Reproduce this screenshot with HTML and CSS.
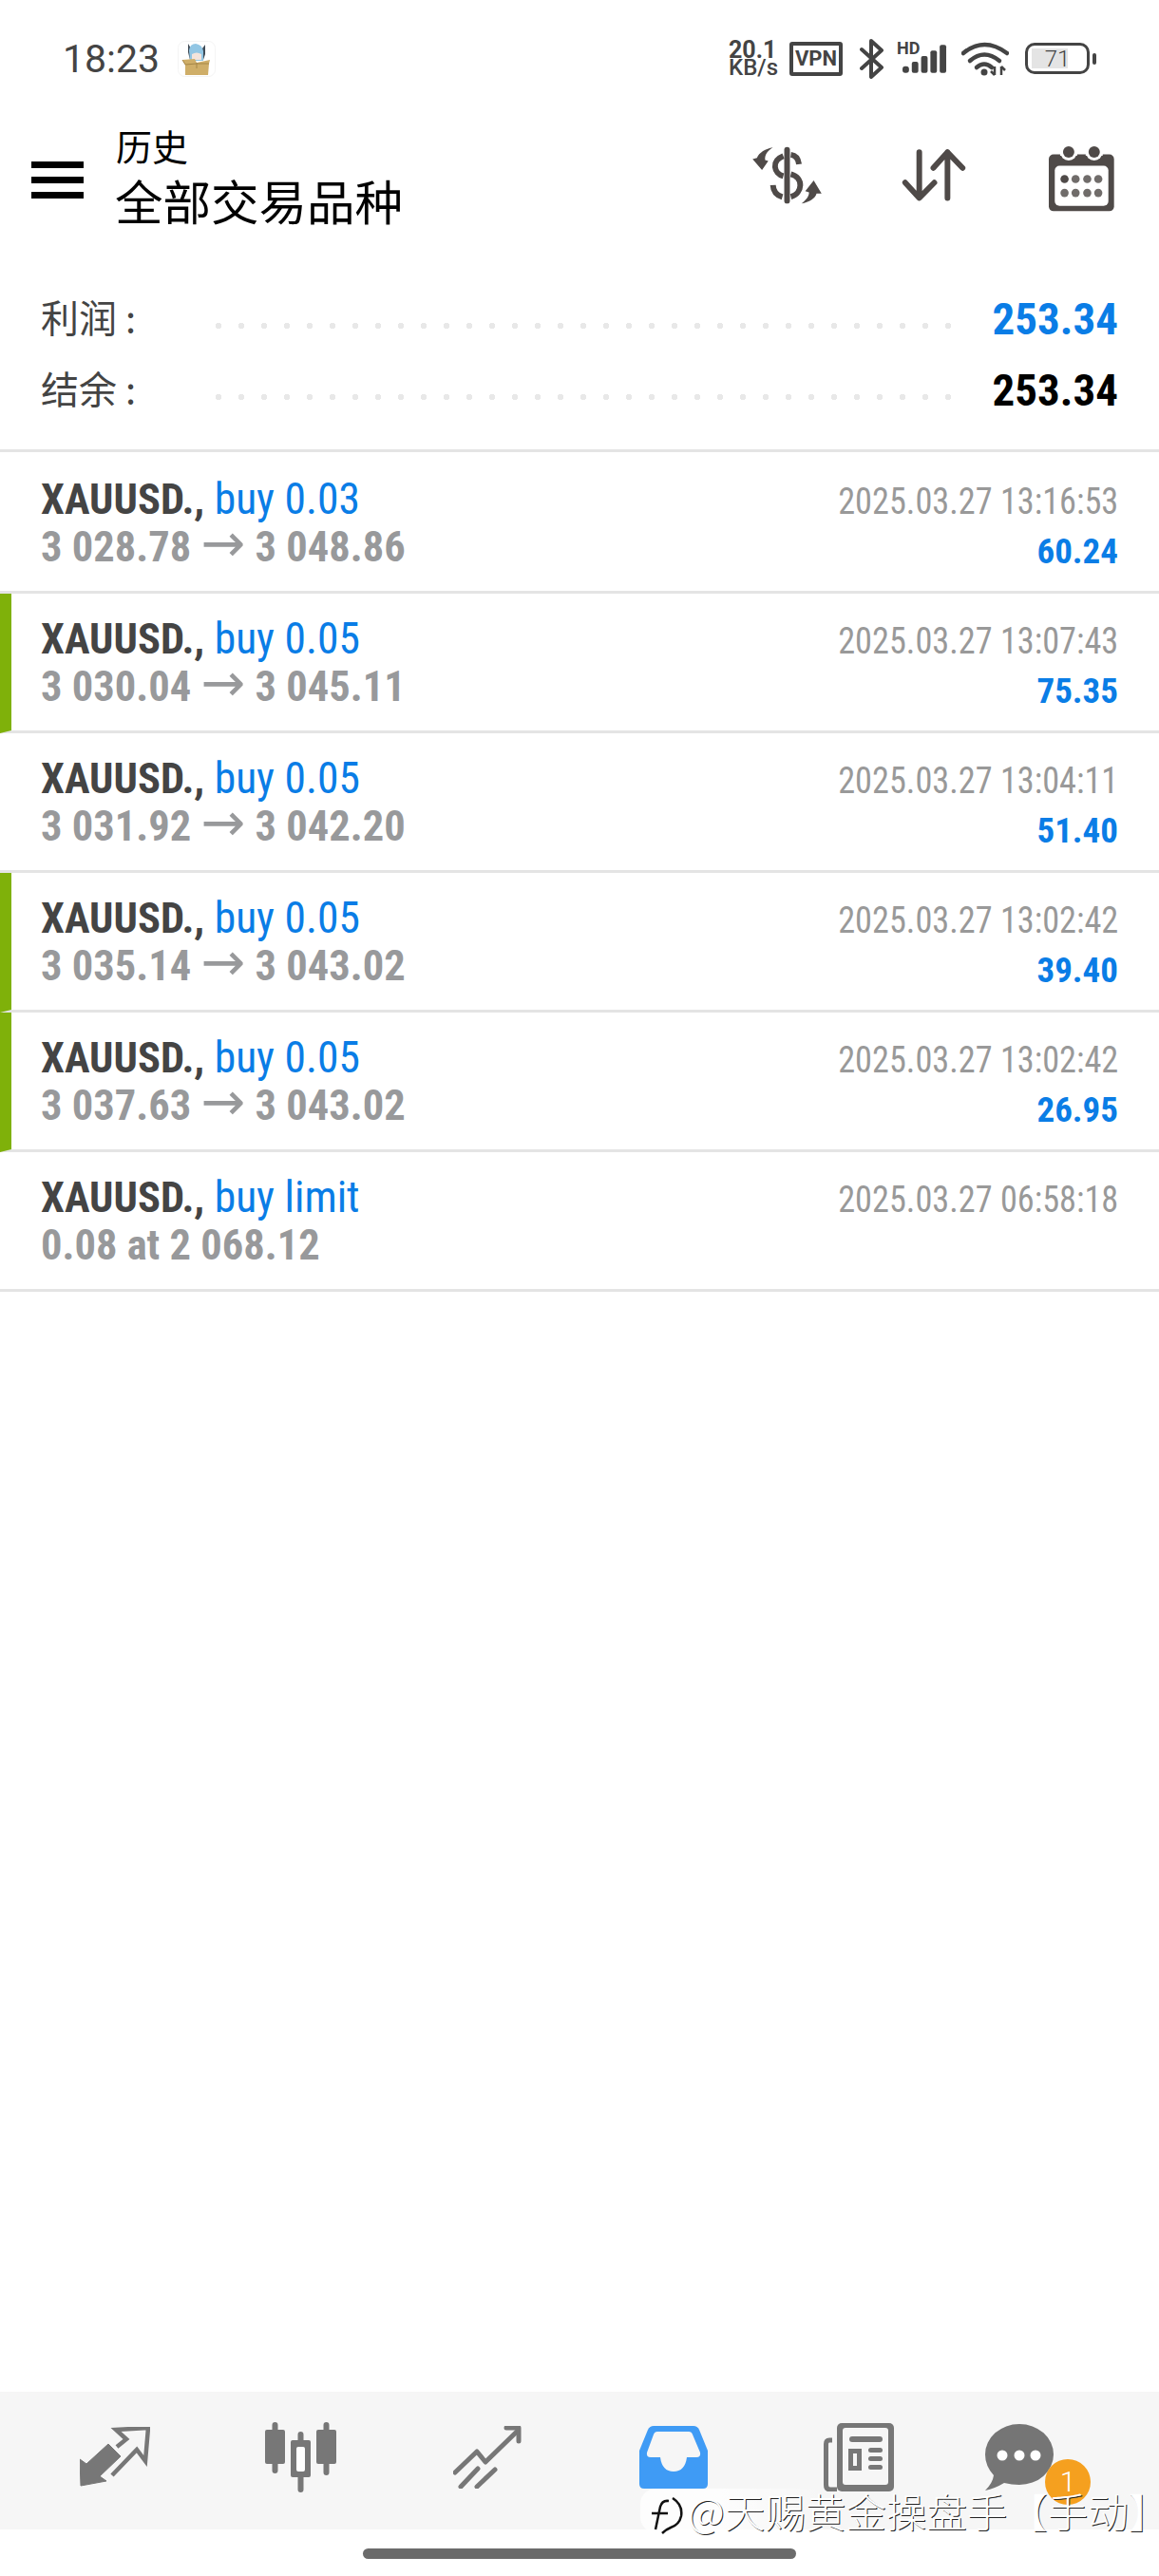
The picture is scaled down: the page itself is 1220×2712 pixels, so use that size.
FILE: index.html
```html
<!DOCTYPE html>
<html lang="zh">

<head>
    <meta charset="UTF-8">
    <meta name="viewport" content="width=device-width, initial-scale=1.0">
    <title>历史</title>
    <link rel="stylesheet" href="styles.css">
</head>

<body>
    <div class="phone">
        <div class="status">
            <span class="time">18:23</span>
            <svg class="avatar" viewBox="0 0 40 38">
                <rect x="0.5" y="0.5" width="39" height="37" rx="7" fill="#fff" stroke="#f4f4f4" />
                <path d="M11 3 L14 8 L26 8 L29 4 L29 14 L27 20 L13 20 L11 12 Z" fill="#3f4a55" />
                <path d="M13 21 L12 10 Q13 3 19 3 Q26 4 27 11 L27 21 Z" fill="#92c6e4" />
                <path d="M15 14 Q20 11 25 14 L25 20 L15 20 Z" fill="#f4e4dc" />
                <path d="M5 20 L18 19 L20 23 L34 20 L33 24 L32 36 L8 36 L8 25 Z" fill="#cfae68" />
                <path d="M5 20 L8 25 L20 24 L33 24 M20 23 V29" stroke="#a58647" stroke-width="1" fill="none" />
            </svg>
            <div class="status-right">
                <div class="speed"><b>20.1</b><span>KB/s</span></div>
                <div class="vpn">VPN</div>
                <svg class="bt" viewBox="0 0 26 42">
                    <path d="M2 11 L23 30 L12 40 V2 L23 12 L2 31" fill="none" stroke="#444" stroke-width="4" stroke-linejoin="round" stroke-linecap="round" />
                </svg>
                <div class="signal">
                    <span class="hd">HD</span>
                    <svg viewBox="0 0 48 30">
                        <rect x="0" y="23" width="7" height="7" rx="3" fill="#444" />
                        <rect x="10" y="18" width="7" height="12" rx="2" fill="#444" />
                        <rect x="20" y="12" width="7" height="18" rx="2" fill="#444" />
                        <rect x="30" y="6" width="7" height="24" rx="2" fill="#444" />
                        <rect x="40" y="0" width="7" height="30" rx="2" fill="#444" />
                    </svg>
                </div>
                <svg class="wifi" viewBox="0 0 50 36">
                    <path d="M2 12 Q24 -6 48 12" fill="none" stroke="#444" stroke-width="4.5" stroke-linecap="round" />
                    <path d="M9 20 Q24 7 40 20" fill="none" stroke="#444" stroke-width="4.5" stroke-linecap="round" />
                    <path d="M16 27 Q24 20 32 27" fill="none" stroke="#444" stroke-width="4.5" stroke-linecap="round" />
                    <circle cx="24" cy="32" r="3.5" fill="#444" />
                    <path d="M35 26 V35 M31 31 L35 35 M42 35 V26 M42 26 L46 30" fill="none" stroke="#444" stroke-width="2.5" />
                </svg>
                <div class="battery">
                    <div class="battery-body">
                        <div class="battery-fill"></div>
                        <span>71</span>
                    </div>
                    <div class="battery-nub"></div>
                </div>
            </div>
        </div>

        <div class="header">
            <div class="menu">
                <i></i>
                <i></i>
                <i></i>
            </div>
            <div class="titles">
                <div class="sub">历史</div>
                <div class="title">全部交易品种</div>
            </div>
            <div class="tools">
                <svg class="tool" viewBox="60 75 240 200">
                    <g fill="none" stroke="#4f4a48" stroke-width="18">
                        <path d="M180 92 V255" stroke-linecap="round" />
                        <path d="M192 108 C208 110 216 122 218 138" />
                        <path d="M168 112 C128 128 138 168 168 176" />
                        <path d="M192 170 C234 180 230 232 192 242" />
                        <path d="M135 205 C136 226 148 238 165 243" />
                    </g>
                    <path d="M135 85 C118 95 108 108 110 125 L120 128 L100 157 L70 122 L84 118 C90 102 112 88 135 85 Z" fill="#4f4a48" />
                    <path d="M226 264 C240 252 250 242 250 228 L238 224 L265 190 L290 232 L274 232 C270 248 250 260 226 264 Z" fill="#4f4a48" />
                </svg>
                <svg class="tool" viewBox="540 75 220 200">
                    <g fill="none" stroke="#4f4a48" stroke-width="18" stroke-linecap="round" stroke-linejoin="round">
                        <path d="M602 100 V245 M557 197 L602 246 L650 197" />
                        <path d="M692 246 V100 M647 150 L692 100 L740 150" />
                    </g>
                </svg>
                <svg class="tool cal" viewBox="1000 60 224 220">
                    <rect x="1008" y="92" width="207" height="180" rx="15" fill="#4f4a48" />
                    <circle cx="1071" cy="84" r="27" fill="#fff" />
                    <circle cx="1152" cy="84" r="27" fill="#fff" />
                    <rect x="1044" y="84" width="54" height="12" fill="#fff" />
                    <rect x="1125" y="84" width="54" height="12" fill="#fff" />
                    <circle cx="1071" cy="84" r="18" fill="#4f4a48" />
                    <circle cx="1152" cy="84" r="18" fill="#4f4a48" />
                    <rect x="1027" y="128" width="170" height="127" rx="15" fill="#fff" />
                    <g fill="#706c6a">
                        <circle cx="1058" cy="170" r="13" fill="#4f4a48" />
                        <circle cx="1093" cy="170" r="13" />
                        <circle cx="1130" cy="170" r="13" />
                        <circle cx="1165" cy="170" r="13" />
                        <circle cx="1058" cy="214" r="13" />
                        <circle cx="1093" cy="214" r="13" />
                        <circle cx="1130" cy="214" r="13" />
                        <circle cx="1165" cy="214" r="13" />
                    </g>
                </svg>
            </div>
        </div>

        <div class="summary">
            <div class="sum-row">
                <span class="sum-label">利润 :</span>
                <span class="dots"></span>
                <span class="sum-value blue">253.34</span>
            </div>
            <div class="sum-row">
                <span class="sum-label">结余 :</span>
                <span class="dots"></span>
                <span class="sum-value">253.34</span>
            </div>
        </div>

        <ul class="deals">
            <li class="deal first">
                <div>
                    <div class="deal-name"><b>XAUUSD.,</b> <span class="blue">buy 0.03</span></div>
                    <div class="deal-price">3 028.78 <span class="arrow">→</span> 3 048.86</div>
                </div>
                <div class="deal-right">
                    <div class="deal-date">2025.03.27 13:16:53</div>
                    <div class="deal-profit">60.24</div>
                </div>
            </li>
            <li class="deal win">
                <div>
                    <div class="deal-name"><b>XAUUSD.,</b> <span class="blue">buy 0.05</span></div>
                    <div class="deal-price">3 030.04 <span class="arrow">→</span> 3 045.11</div>
                </div>
                <div class="deal-right">
                    <div class="deal-date">2025.03.27 13:07:43</div>
                    <div class="deal-profit">75.35</div>
                </div>
            </li>
            <li class="deal">
                <div>
                    <div class="deal-name"><b>XAUUSD.,</b> <span class="blue">buy 0.05</span></div>
                    <div class="deal-price">3 031.92 <span class="arrow">→</span> 3 042.20</div>
                </div>
                <div class="deal-right">
                    <div class="deal-date">2025.03.27 13:04:11</div>
                    <div class="deal-profit">51.40</div>
                </div>
            </li>
            <li class="deal win">
                <div>
                    <div class="deal-name"><b>XAUUSD.,</b> <span class="blue">buy 0.05</span></div>
                    <div class="deal-price">3 035.14 <span class="arrow">→</span> 3 043.02</div>
                </div>
                <div class="deal-right">
                    <div class="deal-date">2025.03.27 13:02:42</div>
                    <div class="deal-profit">39.40</div>
                </div>
            </li>
            <li class="deal win">
                <div>
                    <div class="deal-name"><b>XAUUSD.,</b> <span class="blue">buy 0.05</span></div>
                    <div class="deal-price">3 037.63 <span class="arrow">→</span> 3 043.02</div>
                </div>
                <div class="deal-right">
                    <div class="deal-date">2025.03.27 13:02:42</div>
                    <div class="deal-profit">26.95</div>
                </div>
            </li>
            <li class="deal">
                <div>
                    <div class="deal-name"><b>XAUUSD.,</b> <span class="blue">buy limit</span></div>
                    <div class="deal-price">0.08 at 2 068.12</div>
                </div>
                <div class="deal-right">
                    <div class="deal-date">2025.03.27 06:58:18</div>
                </div>
            </li>
        </ul>

        <div class="nav">
            <div class="nav-item">
                <svg width="74" height="64" viewBox="0 0 74 64">
                    <path d="M0 34 L7 39 L30 18 L43 31 L21 52 L28 57 L1 62 Z" fill="#777" stroke="#777" stroke-linejoin="round" />
                    <path d="M39 21 L49 13 L38 3 L72 1 L69 36 L60 24 L34 51" fill="none" stroke="#777" stroke-width="4.5" />
                </svg>
            </div>
            <div class="nav-item">
                <svg width="76" height="74" viewBox="0 0 76 74">
                    <g stroke="#777" stroke-width="6" stroke-linecap="round">
                        <path d="M10.5 3 V51 M37.5 13 V71 M64.5 3 V53" />
                    </g>
                    <rect x="0" y="8" width="21" height="36" rx="2" fill="#777" />
                    <rect x="54" y="8" width="21" height="36" rx="2" fill="#777" />
                    <rect x="27" y="19" width="21" height="39" rx="2" fill="#777" />
                    <rect x="33" y="26" width="9" height="26" rx="2" fill="#fff" />
                </svg>
            </div>
            <div class="nav-item">
                <svg width="72" height="66" viewBox="0 0 72 66">
                    <g fill="none" stroke="#777" stroke-width="5" stroke-linecap="round" stroke-linejoin="round">
                        <path d="M2 49 L25 27 L34 38 L67 6" />
                        <path d="M56 2 H69 V16" />
                        <path d="M8 64 L26 45 M25 64 L44 46" />
                    </g>
                </svg>
            </div>
            <div class="nav-item">
                <svg width="72" height="66" viewBox="0 0 72 66">
                    <path d="M15 0 H57 Q61 0 63 4 L72 26 V61 Q72 66 67 66 H5 Q0 66 0 61 V26 L9 4 Q11 0 15 0 Z" fill="#3f9bf5" />
                    <path d="M19 6 H52 Q55 6 56 9 L64 28 Q65 33 60 33 H50 Q48 48 36 48 Q24 48 22 33 H12 Q7 33 8 28 L15 9 Q16 6 19 6 Z" fill="#f6f6f6" />
                </svg>
            </div>
            <div class="nav-item">
                <svg width="76" height="72" viewBox="0 0 76 72">
                    <rect x="14" y="0" width="60" height="72" rx="5" fill="#777" />
                    <rect x="20" y="5" width="48" height="60" rx="3" fill="#f6f6f6" />
                    <path d="M9 18 H6 Q2.500 18 2.500 22 V65 Q2.500 70 7 70 H14" fill="none" stroke="#777" stroke-width="5" />
                    <rect x="27" y="14" width="35" height="6" rx="3" fill="#777" />
                    <path d="M26 27 H40 V50 H26 Z M31 32 V45 H35 V32 Z" fill="#777" fill-rule="evenodd" />
                    <rect x="47" y="26" width="15" height="5" rx="2.500" fill="#777" />
                    <rect x="47" y="35" width="15" height="5" rx="2.500" fill="#777" />
                    <rect x="47" y="44" width="15" height="5" rx="2.500" fill="#777" />
                </svg>
            </div>
            <div class="nav-item chat">
                <svg width="72" height="70" viewBox="0 0 72 70">
                    <path d="M36 0 A36 32 0 0 1 36 64 Q28 64 20 62 Q10 68 0 70 Q8 62 9 54 Q0 44 0 32 A36 32 0 0 1 36 0 Z" fill="#757575" />
                    <circle cx="18" cy="33" r="5.500" fill="#fff" />
                    <circle cx="36" cy="33" r="5.500" fill="#fff" />
                    <circle cx="53" cy="33" r="5.500" fill="#fff" />
                </svg>
                <span class="badge">1</span>
            </div>
        </div>

        <div class="home-bar"></div>

        <div class="mark">
            <svg class="mark-logo" viewBox="0 0 36 40">
                <g fill="none" stroke-width="2.500">
                    <path stroke="#fff" d="M20 3 Q13 2 11 9 L6 33 M2 16 H19 M24 0 Q35 7 33 19 Q31 28 22 31 Q17 33 13 37" />
                    <path stroke="#111" d="M21 4 Q14 3 12 10 L7 34 M3 17 H20 M25 1 Q36 8 34 20 Q32 29 23 32 Q18 34 14 38" />
                </g>
            </svg>
            <span>@天赐黄金操盘手【手动】</span>
        </div>
    </div>
</body>

</html>
```

FILE: styles.css
```css
* {
    margin: 0;
    padding: 0;
    box-sizing: border-box;
    list-style: none;
}

body {
    width: 1220px;
    height: 2712px;
    background-color: #fff;
    font-family: "Roboto Condensed", Roboto, "Noto Sans CJK SC", sans-serif;
}

.phone {
    position: relative;
    display: flex;
    flex-direction: column;
    width: 1220px;
    height: 2712px;
    overflow: hidden;
}

/* status bar */
.status {
    display: flex;
    align-items: center;
    height: 118px;
    padding: 5px 66px 0 66px;
    color: #444;
}

.time {
    font-family: Roboto, sans-serif;
    font-size: 41px;
    margin-right: 19px;
}

.avatar {
    width: 40px;
    height: 38px;
}

.status-right {
    display: flex;
    align-items: center;
    margin-left: auto;
    height: 44px;
}

.speed {
    display: flex;
    flex-direction: column;
    width: 64px;
    font-family: Roboto, sans-serif;
    line-height: 18px;
}

.speed b {
    font-size: 25px;
}

.speed span {
    font-size: 24px;
    font-weight: 500;
}

.vpn {
    display: flex;
    align-items: center;
    justify-content: center;
    width: 56px;
    height: 36px;
    border: 4px solid #444;
    border-radius: 3px;
    font-family: Roboto, sans-serif;
    font-size: 22px;
    font-weight: 700;
}

.bt {
    width: 26px;
    height: 42px;
    margin-left: 18px;
}

.signal {
    position: relative;
    width: 53px;
    height: 34px;
    margin-left: 13px;
}

.signal svg {
    position: absolute;
    left: 6px;
    bottom: 2px;
    width: 47px;
    height: 30px;
}

.hd {
    position: absolute;
    left: 0;
    top: -5px;
    font-family: Roboto, sans-serif;
    font-size: 18px;
    font-weight: 700;
}

.wifi {
    width: 50px;
    height: 36px;
    margin-left: 15px;
}

.battery {
    display: flex;
    align-items: center;
    margin-left: 17px;
}

.battery-body {
    position: relative;
    display: flex;
    align-items: center;
    justify-content: center;
    width: 68px;
    height: 33px;
    border: 3px solid #444;
    border-radius: 10px;
    font-family: Roboto, sans-serif;
    font-size: 24px;
    font-weight: 300;
}

.battery-fill {
    position: absolute;
    left: 4px;
    top: 3px;
    width: 38px;
    height: 21px;
    background-color: #e4e4e4;
}

.battery-body span {
    position: relative;
}

.battery-nub {
    width: 4px;
    height: 12px;
    margin-left: 3px;
    border-radius: 2px;
    background-color: #444;
}

/* toolbar */
.header {
    display: flex;
    align-items: center;
    height: 142px;
    padding: 0 4px 0 33px;
}

.menu {
    display: flex;
    flex-direction: column;
    gap: 9px;
    width: 55px;
    margin-right: 34px;
}

.menu i {
    height: 7px;
    background-color: #000;
}

.titles {
    color: #000;
    font-family: "Noto Sans CJK SC", sans-serif;
    margin-top: -8px;
}

.sub {
    font-size: 38px;
    line-height: 50px;
}

.title {
    margin-left: -1px;
    font-size: 50.500px;
    line-height: 65px;
}

.tools {
    display: flex;
    margin-left: auto;
    margin-top: -2px;
}

.tools svg {
    display: block;
}

.tool {
    width: 155px;
    height: 66px;
}

.tool.cal {
    height: 73px;
}

/* profit and balance */
.summary {
    height: 216px;
    padding-top: 38px;
    border-bottom: 3px solid #e4e4e4;
}

.sum-row {
    display: flex;
    align-items: center;
    height: 75px;
    padding: 0 43px;
}

.sum-label {
    width: 175px;
    margin-bottom: 6px;
    color: #444;
    font-family: "Noto Sans CJK SC", sans-serif;
    font-size: 40px;
}

.dots {
    width: 792px;
    height: 10px;
    margin-top: 14px;
    background-image: radial-gradient(circle 3.5px at 12px 5px, #e8e8e8 95%, transparent);
    background-size: 24px 10px;
    background-repeat: repeat-x;
}

.sum-value {
    margin-left: auto;
    color: #000;
    font-size: 47px;
    font-weight: 700;
}

.blue,
.sum-value.blue {
    color: #0a7de6;
}

/* deal rows */
.deal {
    display: flex;
    justify-content: space-between;
    height: 147px;
    padding: 23px 43px 0;
    border-bottom: 3px solid #e4e4e4;
}

.deal.first {
    height: 149px;
    padding-top: 25px;
}

.deal.win {
    padding-left: 31px;
    border-left: 12px solid #7fb10a;
}

.deal-name,
.deal-price {
    height: 50px;
    font-size: 45.500px;
    line-height: 50px;
    white-space: nowrap;
}

.deal-name b {
    color: #444;
    font-size: 44.500px;
}

.deal-price {
    color: #98999b;
    font-size: 44.500px;
    font-weight: 700;
}

.arrow {
    font-family: "DejaVu Sans", sans-serif;
    font-size: 56px;
    font-weight: 400;
    line-height: 0;
}

.deal-right {
    padding-top: 2px;
    text-align: right;
}

.deal-date {
    height: 50px;
    color: #999;
    font-size: 39px;
    line-height: 50px;
    white-space: nowrap;
    transform: scaleX(0.93);
    transform-origin: right;
}

.deal-profit {
    height: 52px;
    color: #0a7de6;
    font-size: 37px;
    font-weight: 700;
    line-height: 56px;
}

/* bottom nav */
.nav {
    display: grid;
    grid-template-columns: repeat(6, 196px);
    align-items: center;
    margin-top: auto;
    height: 145px;
    padding: 0 0 8px 23px;
    background-color: #f6f6f6;
}

.nav-item {
    display: flex;
    justify-content: center;
}

.nav-item svg {
    display: block;
}

.chat {
    position: relative;
    justify-content: flex-start;
    padding-left: 34px;
}

.badge {
    position: absolute;
    left: 97px;
    top: 37px;
    width: 48px;
    height: 48px;
    border-radius: 50%;
    background-color: #f5a01f;
    color: #fff;
    font-family: Roboto, sans-serif;
    font-size: 30px;
    font-weight: 300;
    line-height: 48px;
    text-align: center;
}

.home-bar {
    width: 456px;
    height: 11px;
    margin: 20px auto 18px;
    border-radius: 6px;
    background-color: #6b6b6b;
}

/* watermark over the nav */
.mark {
    position: absolute;
    left: 674px;
    top: 2620px;
    display: flex;
    align-items: center;
    width: 546px;
    height: 46px;
    padding-left: 9px;
    border-radius: 16px 0 0 16px;
    background-image: linear-gradient(90deg, rgba(255, 255, 255, 0.8) 15%, transparent 35%);
    color: #fff;
    font-family: "Noto Sans CJK SC", sans-serif;
    font-size: 42.500px;
    font-weight: 300;
    line-height: 1;
    text-shadow: 1px 1px 0 #222;
    white-space: nowrap;
}

.mark-logo {
    width: 36px;
    height: 40px;
    margin: 12px 5px 0 0;
    flex-shrink: 0;
}
```
